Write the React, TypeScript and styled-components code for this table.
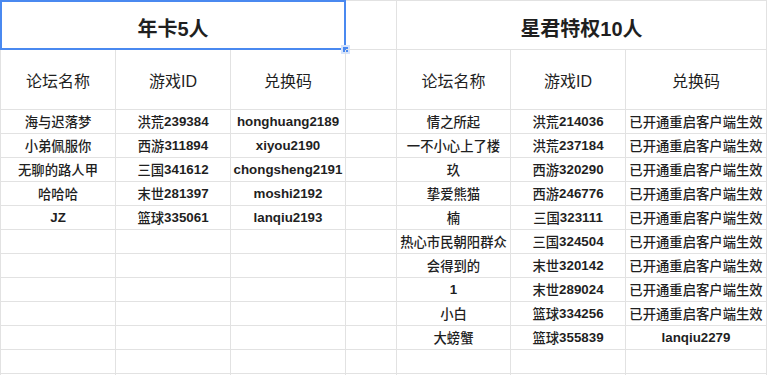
import React from "react";
import styled, { createGlobalStyle } from "styled-components";

const GlobalStyle = createGlobalStyle`
  html, body {
    margin: 0;
    padding: 0;
    background: #fff;
  }
  body {
    font-family: "Liberation Sans", "Noto Sans CJK SC", sans-serif;
    color: #1f1f1f;
  }
`;

const LINE = "#e2e2e2";
const COLS = "115px 115px 115px 51px 114px 115px 141px";

const Sheet = styled.div`
  width: 768px;
  height: 375px;
  overflow: hidden;
  background: #fff;
`;

const Grid = styled.div`
  display: grid;
  grid-template-columns: ${COLS};
  grid-template-rows: 49px 60px;
  grid-auto-rows: 24px;
  border-top: 1px solid ${LINE};
  border-left: 1px solid ${LINE};
  width: max-content;
`;

const Cell = styled.div<{ $span?: number; $kind?: "title" | "head" | "data" }>`
  grid-column: span ${props => props.$span || 1};
  box-sizing: border-box;
  border-right: 1px solid ${LINE};
  border-bottom: 1px solid ${LINE};
  display: flex;
  align-items: center;
  justify-content: center;
  white-space: nowrap;
  position: relative;
  font-size: ${props =>
    props.$kind === "title" ? "20px" : props.$kind === "head" ? "16px" : "13.33px"};
  font-weight: ${props =>
    props.$kind === "title" ? "bold" : props.$kind === "head" ? "normal" : "500"};
  padding-top: ${props => (props.$kind === "title" ? "4px" : "0")};
`;

// latin runs in the data cells read heavier than the hanzi
const Latin = styled.span`
  font-weight: bold;
`;

const Selection = styled.div`
  position: absolute;
  left: -1px;
  top: -1px;
  right: -1px;
  bottom: -1px;
  border: 2px solid #4a89f0;
  pointer-events: none;
`;

const Handle = styled.div`
  position: absolute;
  right: -6px;
  bottom: -6px;
  width: 5px;
  height: 5px;
  background: #4a89f0;
  border: 2px solid #d6e4fc;
`;

type Row = [string, string, string];

const left: Row[] = [
  ["海与迟落梦", "洪荒239384", "honghuang2189"],
  ["小弟佩服你", "西游311894", "xiyou2190"],
  ["无聊的路人甲", "三国341612", "chongsheng2191"],
  ["哈哈哈", "末世281397", "moshi2192"],
  ["JZ", "篮球335061", "lanqiu2193"],
];

const done = "已开通重启客户端生效";

const right: Row[] = [
  ["情之所起", "洪荒214036", done],
  ["一不小心上了楼", "洪荒237184", done],
  ["玖", "西游320290", done],
  ["挚爱熊猫", "西游246776", done],
  ["楠", "三国323111", done],
  ["热心市民朝阳群众", "三国324504", done],
  ["会得到的", "末世320142", done],
  ["1", "末世289024", done],
  ["小白", "篮球334256", done],
  ["大螃蟹", "篮球355839", "lanqiu2279"],
];

const headers = ["论坛名称", "游戏ID", "兑换码"];

const Value: React.FC<{ text: string }> = ({ text }) => (
  <>
    {text
      .split(/([\x20-\x7e]+)/)
      .filter(Boolean)
      .map((part, i) =>
        /^[\x20-\x7e]+$/.test(part) ? <Latin key={i}>{part}</Latin> : part
      )}
  </>
);

const App: React.FC = () => {
  const rows = Array.from({ length: 12 }, (_, i) => ({
    l: left[i] || ["", "", ""],
    r: right[i] || ["", "", ""],
  }));

  return (
    <>
      <GlobalStyle />
      <Sheet>
        <Grid>
          <Cell $span={3} $kind="title">
            年卡5人
            <Selection>
              <Handle />
            </Selection>
          </Cell>
          <Cell />
          <Cell $span={3} $kind="title">
            星君特权10人
          </Cell>

          {headers.map(h => (
            <Cell key={"l" + h} $kind="head">
              {h}
            </Cell>
          ))}
          <Cell />
          {headers.map(h => (
            <Cell key={"r" + h} $kind="head">
              {h}
            </Cell>
          ))}

          {rows.map((row, i) => (
            <React.Fragment key={i}>
              {row.l.map((v, j) => (
                <Cell key={"l" + j}>
                  <Value text={v} />
                </Cell>
              ))}
              <Cell />
              {row.r.map((v, j) => (
                <Cell key={"r" + j}>
                  <Value text={v} />
                </Cell>
              ))}
            </React.Fragment>
          ))}
        </Grid>
      </Sheet>
    </>
  );
};

export default App;
